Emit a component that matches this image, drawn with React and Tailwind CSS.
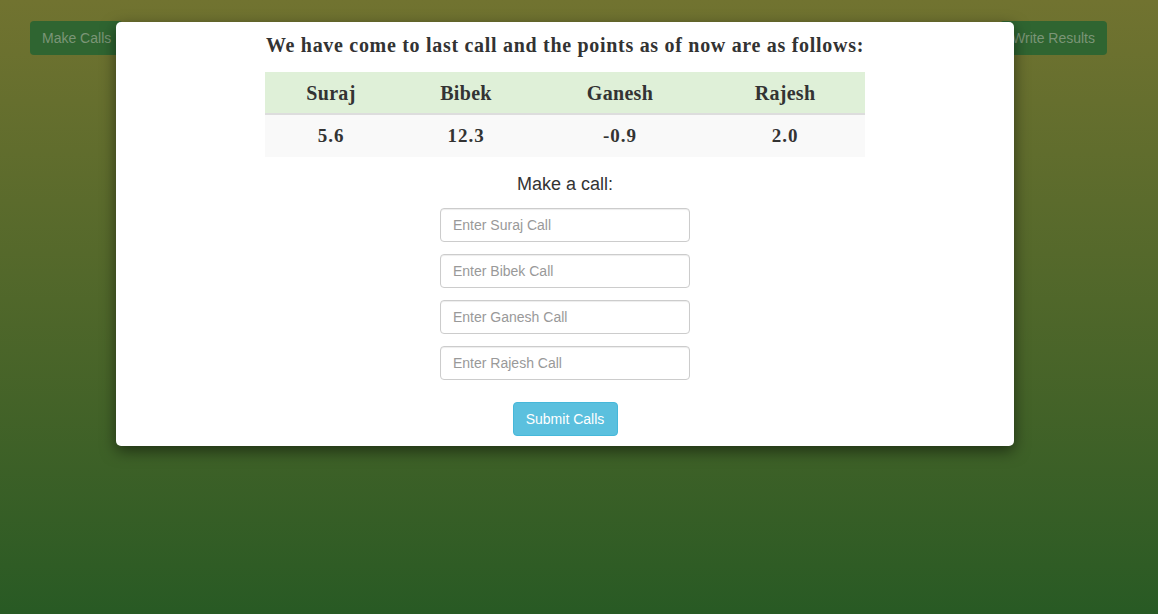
const players = [
  { name: "Suraj", points: "5.6", w: "w-[132px]" },
  { name: "Bibek", points: "12.3", w: "w-[138px]" },
  { name: "Ganesh", points: "-0.9", w: "w-[170px]" },
  { name: "Rajesh", points: "2.0", w: "w-[160px]" },
];

const CallModal = () => {
  return (
    <div className="absolute left-[116px] top-[22px] w-[898px] h-[424px] bg-white rounded-[5px] shadow-[0_5px_15px_rgba(0,0,0,0.5)] flex flex-col items-center">
      <h3 className="mt-[10px] text-[20px] leading-[26px] tracking-[0.7px] font-bold text-[#333] font-['Liberation_Serif',serif]">
        We have come to last call and the points as of now are as follows:
      </h3>
      <div className="w-[600px] mt-[14px] font-['Liberation_Serif',serif] font-bold text-[#333]">
        <div className="flex bg-[#dff0d8] h-[43px] border-b-2 border-[#ddd] text-[20px] tracking-[0.3px]">
          {players.map((p) => (
            <div key={p.name} className={`${p.w} flex items-center justify-center`}>
              {p.name}
            </div>
          ))}
        </div>
        <div className="flex bg-[#f9f9f9] h-[42px] text-[19px] tracking-[1px]">
          {players.map((p) => (
            <div key={p.name} className={`${p.w} flex items-center justify-center`}>
              {p.points}
            </div>
          ))}
        </div>
      </div>
      <p className="mt-[16px] text-[18px] leading-[22px] text-[#333] font-['Liberation_Sans',sans-serif]">
        Make a call:
      </p>
      <div className="mt-[13px] flex flex-col gap-[12px] font-['Liberation_Sans',sans-serif]">
        {players.map((p) => (
          <input
            key={p.name}
            type="text"
            placeholder={`Enter ${p.name} Call`}
            className="w-[250px] h-[34px] px-[12px] text-[14px] text-[#555] border border-[#ccc] rounded-[4px] shadow-[inset_0_1px_1px_rgba(0,0,0,0.075)] placeholder:text-[#999] outline-none"
          />
        ))}
      </div>
      <button className="mt-[22px] w-[105px] h-[34px] bg-[#5bc0de] border border-[#46b8da] rounded-[4px] text-white text-[14px] font-['Liberation_Sans',sans-serif]">
        Submit Calls
      </button>
    </div>
  );
};

export default function App() {
  return (
    <div className="relative w-full h-[614px] overflow-hidden bg-gradient-to-b from-[#717330] to-[#285a24]">
      <div className="flex justify-between pl-[30px] pr-[51px] pt-[21px] font-['Liberation_Sans',sans-serif]">
        <button className="h-[34px] px-[12px] rounded-[4px] bg-[#2f6531] text-[14px] text-[#7b9577]">
          Make Calls
        </button>
        <button className="h-[34px] px-[12px] rounded-[4px] bg-[#2f6531] text-[14px] text-[#7b9577]">
          Write Results
        </button>
      </div>
      <CallModal />
    </div>
  );
}
